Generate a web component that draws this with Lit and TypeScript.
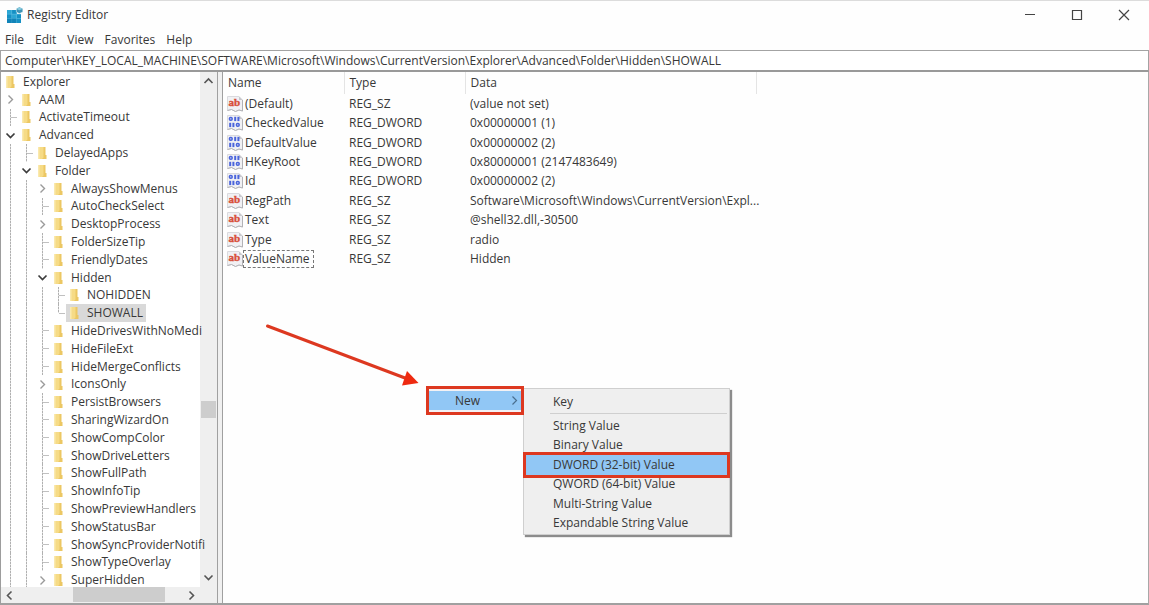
import { LitElement, html, css, svg, nothing } from "lit";
import { customElement, property } from "lit/decorators.js";
import { classMap } from "lit/directives/class-map.js";

type Node = { name: string; depth: number; state?: "open" | "closed"; selected?: boolean; last?: boolean };

const TREE: Node[] = [
  { name: "Explorer", depth: 0 },
  { name: "AAM", depth: 1, state: "closed" },
  { name: "ActivateTimeout", depth: 1 },
  { name: "Advanced", depth: 1, state: "open" },
  { name: "DelayedApps", depth: 2 },
  { name: "Folder", depth: 2, state: "open" },
  { name: "AlwaysShowMenus", depth: 3, state: "closed" },
  { name: "AutoCheckSelect", depth: 3 },
  { name: "DesktopProcess", depth: 3, state: "closed" },
  { name: "FolderSizeTip", depth: 3 },
  { name: "FriendlyDates", depth: 3 },
  { name: "Hidden", depth: 3, state: "open" },
  { name: "NOHIDDEN", depth: 4 },
  { name: "SHOWALL", depth: 4, selected: true, last: true },
  { name: "HideDrivesWithNoMedi", depth: 3 },
  { name: "HideFileExt", depth: 3 },
  { name: "HideMergeConflicts", depth: 3 },
  { name: "IconsOnly", depth: 3, state: "closed" },
  { name: "PersistBrowsers", depth: 3 },
  { name: "SharingWizardOn", depth: 3 },
  { name: "ShowCompColor", depth: 3 },
  { name: "ShowDriveLetters", depth: 3 },
  { name: "ShowFullPath", depth: 3 },
  { name: "ShowInfoTip", depth: 3 },
  { name: "ShowPreviewHandlers", depth: 3 },
  { name: "ShowStatusBar", depth: 3 },
  { name: "ShowSyncProviderNotifi", depth: 3 },
  { name: "ShowTypeOverlay", depth: 3 },
  { name: "SuperHidden", depth: 3, state: "closed" },
];

const VALUES: [string, string, string][] = [
  ["(Default)", "REG_SZ", "(value not set)"],
  ["CheckedValue", "REG_DWORD", "0x00000001 (1)"],
  ["DefaultValue", "REG_DWORD", "0x00000002 (2)"],
  ["HKeyRoot", "REG_DWORD", "0x80000001 (2147483649)"],
  ["Id", "REG_DWORD", "0x00000002 (2)"],
  ["RegPath", "REG_SZ", "Software\\Microsoft\\Windows\\CurrentVersion\\Expl..."],
  ["Text", "REG_SZ", "@shell32.dll,-30500"],
  ["Type", "REG_SZ", "radio"],
  ["ValueName", "REG_SZ", "Hidden"],
];

const chevron = (dir: "up" | "down" | "left" | "right", color = "#555", w = 1.6) => {
  const d = {
    up: "M1.5 7 L5.5 3 L9.5 7",
    down: "M1.5 3.5 L5.5 7.5 L9.5 3.5",
    left: "M7.5 1.5 L3.5 5.5 L7.5 9.5",
    right: "M3.5 1.5 L7.5 5.5 L3.5 9.5",
  }[dir];
  return html`<svg width="11" height="11" viewBox="0 0 11 11" aria-hidden="true"><path d=${d} fill="none" stroke=${color} stroke-width=${w} /></svg>`;
};

const shared = css`
  * { box-sizing: border-box; }
  svg { display: block; flex: none; }
  button {
    font: inherit; color: inherit; background: none; border: 0; padding: 0; margin: 0;
    display: flex; align-items: center; justify-content: center;
  }
`;

@customElement("key-tree")
export class KeyTree extends LitElement {
  static styles = [shared, css`
    :host { display: grid; grid-template-columns: minmax(0, 1fr) 16px; grid-template-rows: minmax(0, 1fr) 16px; background: #efefef; }
    .rows { margin: 0; padding: 1px 0 0 1px; list-style: none; display: grid; grid-auto-rows: minmax(0, 1fr); background: #fff; margin: 0 1px -2px 0; }
    .row { display: flex; min-width: 0; align-items: stretch; white-space: nowrap; }
    .cell { flex: none; width: 16px; display: flex; align-items: center; justify-content: center; }
    .line, .branch, .end {
      background-image: repeating-linear-gradient(#b0b0b0 0 2px, #e0e0e0 2px 3px);
      background-size: 1px 100%; background-position: 8px 0; background-repeat: no-repeat;
    }
    .branch, .end {
      background-image: repeating-linear-gradient(#b0b0b0 0 2px, #e0e0e0 2px 3px), linear-gradient(#c0c0c0, #c0c0c0);
      background-size: 1px 100%, 6px 1px; background-position: 8px 0, 9px 50%;
    }
    .end { background-size: 1px 50%, 6px 1px; }
    .label { display: flex; align-items: center; padding: 0 3px; gap: 7px; }
    .selected .label { background: #d9d9d9; }
    .bar { display: flex; position: relative; background: #efefef; }
    .vertical { flex-direction: column; background: none; }
    .horizontal { padding-right: 2px; grid-column: span 2; }
    .vertical .arrow { height: 19px; margin-right: 2px; }
    .horizontal .arrow { width: 17px; }
    .thumb { background: #cdcdcd; }
    .vertical .before { flex: 312; }
    .vertical .thumb { height: 17px; margin-right: 1px; }
    .vertical .after { flex: 151; }
    .horizontal .before { flex: 55; }
    .horizontal .thumb { flex: 92; margin-bottom: 1px; }
    .horizontal .after { flex: 18; }
    .horizontal { padding-right: 17px; }
  `];

  private cells(n: Node) {
    return Array.from({ length: n.depth }, (_, i) => {
      const own = i === n.depth - 1;
      if (!own) return html`<span class="cell line"></span>`;
      if (n.state) {
        return html`<button class="cell toggle" aria-label=${(n.state === "open" ? "Collapse " : "Expand ") + n.name}>
          ${n.state === "open" ? chevron("down", "#3c3c3c", 1.7) : chevron("right", "#9a9a9a", 1.4)}</button>`;
      }
      return html`<span class=${classMap({ cell: true, branch: !n.last, end: !!n.last })}></span>`;
    });
  }

  render() {
    return html`
      <ul class="rows" role="tree" aria-label="Registry keys">
        ${TREE.map((n) => html`
          <li class=${classMap({ row: true, selected: !!n.selected })} role="treeitem" aria-level=${n.depth + 1}
            aria-selected=${n.selected ? "true" : "false"} aria-expanded=${n.state ? String(n.state === "open") : nothing}>
            ${this.cells(n)}
            <span class="label">
              <svg width="11" height="14" viewBox="0 0 11 14" aria-hidden="true">
                <path d="M1 1 H7.5 V13 H1 Z" fill="#f6db86" />
                <path d="M6.5 1 H8.5 V9 H9.5 V13 H5 L6.5 11.5 Z" fill="#ecc763" />
                <path d="M1 1 H2.5 V13 H1 Z" fill="#fae9ae" />
              </svg>
              ${n.name}
            </span>
          </li>`)}
      </ul>
      <div class="bar vertical">
        <button class="arrow" aria-label="Scroll up">${chevron("up")}</button>
        <span class="before"></span><span class="thumb"></span><span class="after"></span>
        <button class="arrow" aria-label="Scroll down">${chevron("down")}</button>
      </div>
      <div class="bar horizontal">
        <button class="arrow" aria-label="Scroll left">${chevron("left")}</button>
        <span class="before"></span><span class="thumb"></span><span class="after"></span>
        <button class="arrow" aria-label="Scroll right">${chevron("right")}</button>
      </div>`;
  }
}

@customElement("value-icon")
export class ValueIcon extends LitElement {
  @property() kind = "REG_SZ";
  static styles = [shared, css`
    :host { display: block; flex: none; }
    .ab { font: bold 11px "Liberation Serif", serif; fill: #d8503a; stroke: #d8503a; stroke-width: 0.4px; }
  `];
  render() {
    const ring = (x: number, y: number) => svg`<rect x=${x} y=${y} width="2.8" height="2.8" rx="1.2" fill="none" stroke="#4a64dc" stroke-width="1.5" />`;
    const one = (x: number, y: number) => svg`<rect x=${x} y=${y} width="2" height="4.3" fill="#4a64dc" />`;
    return html`<svg width="16" height="16" viewBox="0 0 16 16" aria-hidden="true">
      <path d="M0.5 0.5 H12 L15.5 4 V15 L12 14 L8.5 15.5 L4.5 13.5 L0.5 14.5 Z" fill="#f1f1f4" stroke="#dadade" />
      <path d="M0.5 14.5 L4.5 13.5 L8.5 15.5 L12 14 L15.5 15 V4" fill="none" stroke="#b2b2b6" />
      <path d="M12 0.5 V4 H15.5 Z" fill="#c6c6ca" />
      ${this.kind === "REG_SZ"
        ? svg`<text class="ab" x="1.5" y="10">ab</text>`
        : svg`${ring(2.4, 2.5)}${one(7.2, 1.8)}${one(10.4, 1.8)}${one(2.2, 7.8)}${one(5.4, 7.8)}${ring(9.4, 8.5)}`}
    </svg>`;
  }
}

@customElement("context-menu")
export class ContextMenu extends LitElement {
  static styles = [shared, css`
    :host { display: flex; align-items: flex-start; }
    .new { width: 98px; height: 29px; border: 3px solid #dd3820; background: #f3f1f4; padding: 2px 0; z-index: 1; }
    .new button { width: 100%; height: 100%; background: #91c7f5; padding: 0 1px 0 26px; justify-content: space-between; }
    .sub { width: 207px; margin: 2px 0 0 -1px; padding: 2px 2px 1px; background: #efefef; border: 1px solid #cfcfcf; box-shadow: 2px 2px 1px #8c8c8c; }
    .sub button { justify-content: flex-start; width: 100%; padding-left: 27px; }
    .key { height: 21px; }
    .rule { border: 0; border-top: 1px solid #cfcfcf; margin: 1px 0 2px 24px; }
    .items { display: grid; grid-auto-rows: minmax(0, 1fr); height: 117px; }
    .active { background: #91c7f5; outline: 3px solid #dd3820; }
  `];
  render() {
    return html`
      <div class="new" role="menu"><button role="menuitem" aria-haspopup="true">New ${chevron("right", "#4a6f8f", 1.2)}</button></div>
      <div class="sub" role="menu" aria-label="New">
        <button class="key" role="menuitem">Key</button>
        <hr class="rule">
        <div class="items">
          ${["String Value", "Binary Value", "DWORD (32-bit) Value", "QWORD (64-bit) Value", "Multi-String Value", "Expandable String Value"].map(
            (t) => html`<button role="menuitem" class=${classMap({ active: t.startsWith("DWORD") })}>${t}</button>`)}
        </div>
      </div>`;
  }
}

@customElement("app-root")
export class AppRoot extends LitElement {
  static styles = [shared, css`
    :host {
      display: flex; flex-direction: column; height: 100vh; overflow: hidden; box-sizing: border-box;
      font: 12px/16px "Open Sans", "Noto Sans", sans-serif; color: #383838; background: #fefefe;
      border-top: 1px solid #dcdcdc;
    }
    .title { display: flex; align-items: center; height: 28px; padding: 0 2px 0 6px; flex: none; }
    .title h1 { font: inherit; margin: 0 0 0 4px; flex: 1; }
    .title button { width: 47px; height: 28px; }
    .menubar { display: flex; gap: 11px; padding-left: 5px; height: 21px; flex: none; }
    .address { flex: none; height: 22px; border: 1px solid #a3a3a3; border-bottom: 2px solid #999; background: #fff; display: flex; }
    .address input { font: inherit; color: inherit; border: 0; padding: 0 4px; background: none; flex: 1; min-width: 0; outline: none; }
    .body { flex: 1; min-height: 0; display: flex; border-left: 1px solid #9d9d9d; border-right: 1px solid #a8a8a8; border-bottom: 2px solid #a0a0a0; }
    key-tree { width: 216px; flex: none; }
    .splitter { flex: none; width: 6px; background: #f0f0f0; border: solid #a0a0a0; border-width: 0 1px; }
    .values { flex: 1; min-width: 0; position: relative; background: #fefefe; }
    table { border-collapse: collapse; table-layout: fixed; width: 534px; }
    th, td { padding: 0 0 0 5px; text-align: left; font-weight: normal; height: 19px; white-space: nowrap; vertical-align: middle; }
    th { height: 22px; border-right: 1px solid #e4e4e4; }
    tbody { height: 175px; }
    .c1 { width: 121px; } .c2 { width: 121px; }
    td:first-child { padding-left: 4px; }
    .name { display: flex; align-items: center; }
    .name span { padding: 0 3px 0 1px; border: 1px dashed transparent; }
    .name .focus { border-color: #777; }
    .arrow { position: absolute; left: 40px; top: 248px; }
    context-menu { position: absolute; left: 203px; top: 314px; }
  `];
  render() {
    return html`
      <header class="title">
        <svg width="17" height="17" viewBox="0 0 17 17" aria-hidden="true">
          <path d="M1 3 H11 V7 H15 V16 H1 Z" fill="#1590c4" />
          <path d="M1 3 H6 V7 H1 Z M6 7 H11 V11 H6 Z" fill="#2ba6d4" />
          <path d="M1 7.2 H15 M1 11.5 H15 M5.7 3 V16 M10.4 3 V16" stroke="#5fbfe2" stroke-width="0.6" />
          <path d="M1 11.5 H10.4 V16 H1 Z" fill="#0c76ac" opacity="0.5" />
          <path d="M13.3 0 L16.8 1.8 V5 L13.3 6.6 L10.4 5 V1.8 Z" fill="#3d93b5" stroke="#fff" stroke-width="0.4" />
          <path d="M10.6 1.9 L13.3 3.2 L16.6 1.9 L13.3 0.3 Z" fill="#8accdf" />
        </svg>
        <h1>Registry Editor</h1>
        <button aria-label="Minimize"><svg width="12" height="12" viewBox="0 0 12 12"><path d="M1 5.5 H11" stroke="#444" /></svg></button>
        <button aria-label="Maximize"><svg width="12" height="12" viewBox="0 0 12 12"><path d="M1.5 1.5 H10.5 V10.5 H1.5 Z" fill="none" stroke="#444" stroke-width="1.2" /></svg></button>
        <button aria-label="Close"><svg width="12" height="12" viewBox="0 0 12 12"><path d="M1 1 L11 11 M11 1 L1 11" stroke="#444" stroke-width="1.2" /></svg></button>
      </header>
      <nav class="menubar">${["File", "Edit", "View", "Favorites", "Help"].map((m) => html`<button>${m}</button>`)}</nav>
      <div class="address"><input type="text" aria-label="Key path"
        .value=${"Computer\\HKEY_LOCAL_MACHINE\\SOFTWARE\\Microsoft\\Windows\\CurrentVersion\\Explorer\\Advanced\\Folder\\Hidden\\SHOWALL"}></div>
      <div class="body">
        <key-tree></key-tree>
        <div class="splitter"></div>
        <main class="values">
          <table>
            <thead><tr><th class="c1">Name</th><th class="c2">Type</th><th>Data</th></tr></thead>
            <tbody>${VALUES.map(([n, t, d]) => html`<tr>
              <td><div class="name"><value-icon kind=${t}></value-icon><span class=${n === "ValueName" ? "focus" : ""}>${n}</span></div></td>
              <td>${t}</td><td>${d}</td></tr>`)}</tbody>
          </table>
          <svg class="arrow" width="160" height="70" viewBox="0 0 160 70" aria-hidden="true">
            <path d="M4.5 6 L142 58" stroke="#dd3820" stroke-width="3" stroke-linecap="round" />
            <path d="M155.5 63 L139 65.5 L144 51 Z" fill="#ee2a10" />
          </svg>
          <context-menu></context-menu>
        </main>
      </div>`;
  }
}
